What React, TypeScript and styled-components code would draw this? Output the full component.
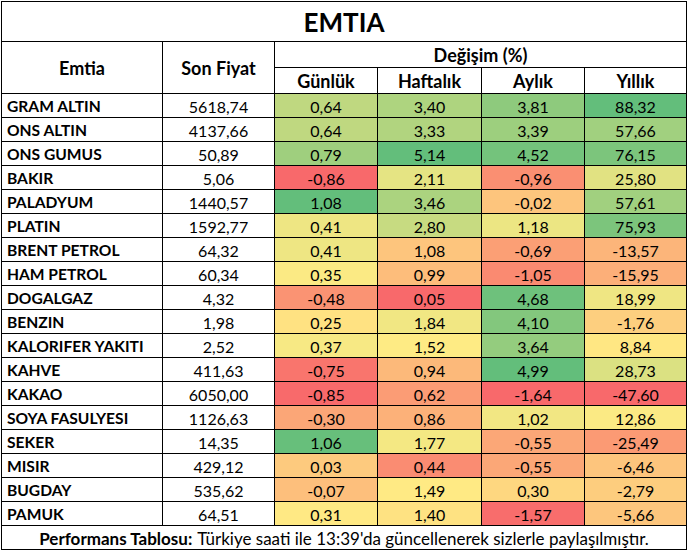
import React from "react";
import styled, { createGlobalStyle } from "styled-components";

const Global = createGlobalStyle`
  html, body { margin: 0; padding: 0; background: #fff; }
  body { font-family: Lato, "Open Sans", sans-serif; color: #000; }
`;

type Row = { name: string; price: string; d: number; w: number; m: number; y: number };

const rows: Row[] = [
  { name: "GRAM ALTIN", price: "5618,74", d: 0.64, w: 3.4, m: 3.81, y: 88.32 },
  { name: "ONS ALTIN", price: "4137,66", d: 0.64, w: 3.33, m: 3.39, y: 57.66 },
  { name: "ONS GUMUS", price: "50,89", d: 0.79, w: 5.14, m: 4.52, y: 76.15 },
  { name: "BAKIR", price: "5,06", d: -0.86, w: 2.11, m: -0.96, y: 25.8 },
  { name: "PALADYUM", price: "1440,57", d: 1.08, w: 3.46, m: -0.02, y: 57.61 },
  { name: "PLATIN", price: "1592,77", d: 0.41, w: 2.8, m: 1.18, y: 75.93 },
  { name: "BRENT PETROL", price: "64,32", d: 0.41, w: 1.08, m: -0.69, y: -13.57 },
  { name: "HAM PETROL", price: "60,34", d: 0.35, w: 0.99, m: -1.05, y: -15.95 },
  { name: "DOGALGAZ", price: "4,32", d: -0.48, w: 0.05, m: 4.68, y: 18.99 },
  { name: "BENZIN", price: "1,98", d: 0.25, w: 1.84, m: 4.1, y: -1.76 },
  { name: "KALORIFER YAKITI", price: "2,52", d: 0.37, w: 1.52, m: 3.64, y: 8.84 },
  { name: "KAHVE", price: "411,63", d: -0.75, w: 0.94, m: 4.99, y: 28.73 },
  { name: "KAKAO", price: "6050,00", d: -0.85, w: 0.62, m: -1.64, y: -47.6 },
  { name: "SOYA FASULYESI", price: "1126,63", d: -0.3, w: 0.86, m: 1.02, y: 12.86 },
  { name: "SEKER", price: "14,35", d: 1.06, w: 1.77, m: -0.55, y: -25.49 },
  { name: "MISIR", price: "429,12", d: 0.03, w: 0.44, m: -0.55, y: -6.46 },
  { name: "BUGDAY", price: "535,62", d: -0.07, w: 1.49, m: 0.3, y: -2.79 },
  { name: "PAMUK", price: "64,51", d: 0.31, w: 1.4, m: -1.57, y: -5.66 },
];

type Key = "d" | "w" | "m" | "y";
const keys: Key[] = ["d", "w", "m", "y"];

const RED = [248, 105, 107];
const YEL = [255, 235, 132];
const GRN = [99, 190, 123];

function mix(a: number[], b: number[], t: number) {
  const c = a.map((v, i) => Math.round(v + (b[i] - v) * t));
  return `rgb(${c[0]},${c[1]},${c[2]})`;
}

function scale(key: Key) {
  const vals = rows.map((r) => r[key]).sort((a, b) => a - b);
  const n = vals.length;
  const pos = 0.5 * (n - 1);
  const lo = Math.floor(pos);
  const mid = vals[lo] + (vals[Math.ceil(pos)] - vals[lo]) * (pos - lo);
  const min = vals[0];
  const max = vals[n - 1];
  return (v: number) => {
    if (v <= mid) return mix(RED, YEL, (v - min) / (mid - min || 1));
    return mix(YEL, GRN, (v - mid) / (max - mid || 1));
  };
}

const scales = Object.fromEntries(keys.map((k) => [k, scale(k)])) as Record<Key, (v: number) => string>;

const fmt = (v: number) => v.toFixed(2).replace(".", ",");

const Sheet = styled.div`
  display: grid;
  grid-template-columns: 160px 111px 102px 103px 102px 101px;
  grid-template-rows: 39px 25px 25px repeat(18, 23px) 23px;
  gap: 1px;
  width: max-content;
  background: #000;
  border: 1px solid #000;
  margin: 1px 0 0 1px;
`;

const Cell = styled.div<{ $bg?: string; $align?: "left" | "center" }>`
  background: ${(p) => p.$bg ?? "#fff"};
  display: flex;
  align-items: center;
  justify-content: ${(p) => (p.$align === "left" ? "flex-start" : "center")};
  padding: ${(p) => (p.$align === "left" ? "1px 0 0 5px" : "1px 0 0 0")};
  font-size: 16px;
  white-space: nowrap;
  overflow: hidden;
`;

const Title = styled(Cell)`
  grid-column: 1 / span 6;
  font-size: 26px;
  font-weight: 700;
`;

const HeadCell = styled(Cell)<{ $rows?: number; $cols?: number }>`
  grid-row: span ${(p) => p.$rows ?? 1};
  grid-column: span ${(p) => p.$cols ?? 1};
  font-size: 18px;
  font-weight: 700;
`;

const NameCell = styled(Cell)`
  font-size: 15.6px;
  font-weight: 700;
`;

const Footer = styled(Cell)`
  grid-column: 1 / span 6;
  font-size: 17px;
  b { font-weight: 700; margin-right: 5px; }
`;

export default function App() {
  return (
    <>
      <Global />
      <Sheet>
        <Title>EMTIA</Title>
        <HeadCell $rows={2}>Emtia</HeadCell>
        <HeadCell $rows={2}>Son Fiyat</HeadCell>
        <HeadCell $cols={4}>Değişim (%)</HeadCell>
        <HeadCell>Günlük</HeadCell>
        <HeadCell>Haftalık</HeadCell>
        <HeadCell>Aylık</HeadCell>
        <HeadCell>Yıllık</HeadCell>
        {rows.map((r) => (
          <React.Fragment key={r.name}>
            <NameCell $align="left">{r.name}</NameCell>
            <Cell>{r.price}</Cell>
            {keys.map((k) => (
              <Cell key={k} $bg={scales[k](r[k])}>
                {fmt(r[k])}
              </Cell>
            ))}
          </React.Fragment>
        ))}
        <Footer>
          <b>Performans Tablosu:</b> Türkiye saati ile 13:39'da güncellenerek sizlerle paylaşılmıştır.
        </Footer>
      </Sheet>
    </>
  );
}
